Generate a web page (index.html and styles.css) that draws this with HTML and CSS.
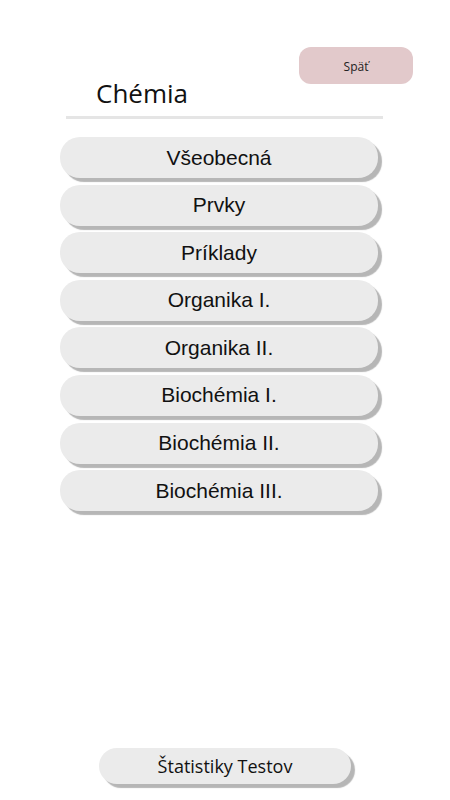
FILE: index.html
```html
<!DOCTYPE html>
<html lang="sk">
<head>
<meta charset="utf-8">
<link rel="stylesheet" href="styles.css">
</head>
<body>
<div class="page">
  <header class="header">
    <h1 class="title">Chémia</h1>
    <button class="back">Späť</button>
  </header>
  <div class="rule"></div>
  <nav class="list">
    <button class="item">Všeobecná</button>
    <button class="item">Prvky</button>
    <button class="item">Príklady</button>
    <button class="item">Organika I.</button>
    <button class="item">Organika II.</button>
    <button class="item">Biochémia I.</button>
    <button class="item">Biochémia II.</button>
    <button class="item">Biochémia III.</button>
  </nav>
  <footer class="footer">
    <button class="stats">Štatistiky Testov</button>
  </footer>
</div>
</body>
</html>
```
FILE: styles.css
```css
html, body {
  margin: 0;
  padding: 0;
  background: #ffffff;
}
.page {
  width: 450px;
  height: 800px;
  display: flex;
  flex-direction: column;
  box-sizing: border-box;
}
.header {
  display: flex;
  justify-content: space-between;
  align-items: flex-start;
  padding: 47px 37px 0 96px;
}
.title {
  margin: 29px 0 0 0;
  font-family: "Open Sans", sans-serif;
  font-weight: 400;
  font-size: 26px;
  line-height: 35px;
  color: #111111;
}
.back {
  width: 114px;
  height: 37px;
  border: none;
  border-radius: 12px;
  background: #e2c9cb;
  font-family: "Open Sans", sans-serif;
  font-size: 12px;
  color: #222222;
  padding: 1px 0 0 0;
}
.rule {
  margin: 5px 0 0 66px;
  width: 317px;
  height: 3px;
  background: #e5e5e5;
}
.list {
  display: flex;
  flex-direction: column;
  gap: 6.6px;
  margin: 18px 0 0 60px;
}
.item {
  width: 318px;
  height: 41px;
  border: none;
  border-radius: 20px;
  background: #ebebeb;
  box-shadow: 4px 4px 1px #b6b6b6;
  font-family: "Liberation Sans", Arial, sans-serif;
  font-size: 21px;
  color: #111111;
  padding: 0;
}
.footer {
  margin-top: auto;
  display: flex;
  justify-content: center;
  padding-bottom: 16px;
}
.stats {
  width: 252px;
  height: 36px;
  border: none;
  border-radius: 18px;
  background: #ebebeb;
  box-shadow: 4px 4px 1px #b6b6b6;
  font-family: "Open Sans", sans-serif;
  font-size: 18px;
  color: #111111;
  padding: 0;
}
```
